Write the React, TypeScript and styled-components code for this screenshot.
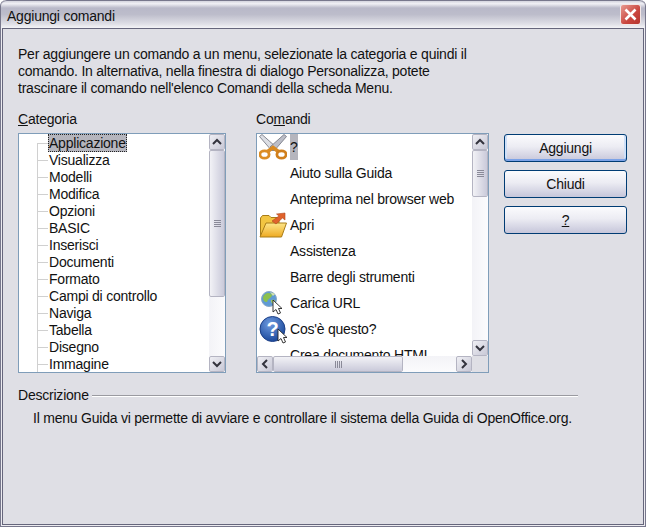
import React from 'react'
import styled, { createGlobalStyle } from 'styled-components'

const Global = createGlobalStyle`
  html, body { margin: 0; padding: 0; background: #fff; }
  * { box-sizing: border-box; }
`

const categories = ['Applicazione', 'Visualizza', 'Modelli', 'Modifica', 'Opzioni', 'BASIC', 'Inserisci', 'Documenti', 'Formato', 'Campi di controllo', 'Naviga', 'Tabella', 'Disegno', 'Immagine']

const Scissors = () => (
  <svg width="28" height="26" viewBox="0 0 28 26">
    <path d="M0.5 2.5 L3 0.5 L17 13 L13 17 Z" fill="#dcdee4" stroke="#7c7e88" strokeWidth="0.9" />
    <path d="M27.5 2.5 L25 0.5 L11 13 L15 17 Z" fill="#bcbec8" stroke="#7c7e88" strokeWidth="0.9" />
    <path d="M8 18 L14 13.5 L20 18" fill="none" stroke="#d98a22" strokeWidth="3.6" />
    <ellipse cx="5.5" cy="20.5" rx="4.6" ry="3.7" fill="none" stroke="#dc8d24" strokeWidth="2.8" />
    <ellipse cx="22.5" cy="20.5" rx="4.6" ry="3.7" fill="none" stroke="#d07f1c" strokeWidth="2.8" />
  </svg>
)

const FolderOpen = () => (
  <svg width="28" height="26" viewBox="0 0 28 26">
    <defs>
      <linearGradient id="flap" x1="0" y1="0" x2="0" y2="1">
        <stop offset="0" stopColor="#fde68a" />
        <stop offset="1" stopColor="#eeaa22" />
      </linearGradient>
    </defs>
    <path d="M1.5 24 L1.5 6 L3.5 3.5 L10 3.5 L12 5.5 L20 5.5 L20 24 Z" fill="#f2c542" stroke="#a87c18" />
    <path d="M1 25 L7 11 L27.5 11 L22.5 25 Z" fill="url(#flap)" stroke="#a87c18" />
    <path d="M13 9 L20 4 L17.5 2 L26 1 L26 8 L23.5 6 L17 12 Z" fill="#e0622c" stroke="#b04a20" strokeWidth="0.6" />
  </svg>
)

const Pointer = () => (
  <path d="M0 0 L0 12 L3 9.5 L5 14 L7.5 13 L5.5 8.5 L9 8.5 Z" fill="#fff" stroke="#222" strokeWidth="0.9" />
)

const GlobeCursor = () => (
  <svg width="28" height="28" viewBox="0 0 28 28">
    <circle cx="10" cy="10" r="7.5" fill="#5f9ad4" stroke="#8aa8c8" />
    <path d="M4 8 C6 3 11 3 13 6 C13 9 9 9 8 13 C5 13 4 11 4 8 Z" fill="#8cc04e" />
    <path d="M12 11 C15 10 17 11 16 14 C14 16 12 14 12 11 Z" fill="#a4cc64" />
    <path d="M11 3 L16 5 L14 7 Z" fill="#d5e4a8" />
    <g transform="translate(14 11)"><Pointer /></g>
  </svg>
)

const HelpCursor = () => (
  <svg width="30" height="30" viewBox="0 0 30 30">
    <defs>
      <radialGradient id="helpBlue" cx="40%" cy="30%" r="70%">
        <stop offset="0" stopColor="#6f9be0" />
        <stop offset="1" stopColor="#1c4a9c" />
      </radialGradient>
    </defs>
    <circle cx="13.5" cy="15" r="12.5" fill="url(#helpBlue)" stroke="#1c3f86" />
    <text x="13.5" y="22" fontFamily="'Liberation Sans', sans-serif" fontWeight="700" fontSize="20" fill="#fff" textAnchor="middle">?</text>
    <g transform="translate(19 15)"><Pointer /></g>
  </svg>
)

const commands: { label: string; icon?: React.ReactNode; selected?: boolean }[] = [
  { label: '?', icon: <Scissors />, selected: true },
  { label: 'Aiuto sulla Guida' },
  { label: 'Anteprima nel browser web' },
  { label: 'Apri', icon: <FolderOpen /> },
  { label: 'Assistenza' },
  { label: 'Barre degli strumenti' },
  { label: 'Carica URL', icon: <GlobeCursor /> },
  { label: "Cos'è questo?", icon: <HelpCursor /> },
  { label: 'Crea documento HTML' },
]

const Chevron = ({ dir }: { dir: 'up' | 'down' | 'left' | 'right' }) => {
  const points = {
    up: 'M1 6 L5 2 L9 6',
    down: 'M1 2 L5 6 L9 2',
    left: 'M6 1 L2 5 L6 9',
    right: 'M2 1 L6 5 L2 9',
  }[dir]
  const wide = dir === 'up' || dir === 'down'
  return (
    <svg width={wide ? 10 : 8} height={wide ? 8 : 10} viewBox={wide ? '0 0 10 8' : '0 0 8 10'}>
      <path d={points} fill="none" stroke="#33333d" strokeWidth="2" />
    </svg>
  )
}

const Window = styled.div`
  width: 646px;
  height: 527px;
  display: flex;
  flex-direction: column;
  border: 1px solid #77778c;
  border-top: 0;
  border-radius: 6px 6px 0 0;
  background: #ecebf0;
  font-family: "Liberation Sans", Arial, sans-serif;
  font-size: 14px;
  letter-spacing: -0.22px;
  color: #111;
  overflow: hidden;
`

const TitleBar = styled.div`
  height: 28px;
  flex: none;
  display: flex;
  align-items: center;
  justify-content: space-between;
  padding: 2px 4px 0 6px;
  border-top: 1px solid #77778c;
  border-radius: 6px 6px 0 0;
  background: linear-gradient(#d4d4de 0%, #f0f0f5 10%, #b8b8c8 26%, #bdbdcb 50%, #e0e0e7 86%, #f4f4f7 100%);
`

const CloseButton = styled.div`
  width: 21px;
  height: 21px;
  margin-top: -2px;
  display: flex;
  align-items: center;
  justify-content: center;
  border: 1px solid #f2e6e6;
  border-radius: 3px;
  background: linear-gradient(135deg, #e89a90, #c9453e 60%, #b5342f);
`

const Frame = styled.div`
  flex: 1;
  margin: 0 1px 1px;
  border: 1px solid #66667c;
  background: #dfdfe5;
  padding: 17px 0 0 15px;
  display: flex;
  flex-direction: column;
`

const Intro = styled.p`
  margin: 0;
  line-height: 17px;
`

const Columns = styled.div`
  margin-top: 14px;
  display: grid;
  grid-template-columns: 208px 233px 123px;
  column-gap: 30px;
  align-items: start;
`

const SideButtons = styled.div`
  margin: 23px 0 0 -15px;
  display: flex;
  flex-direction: column;
  gap: 8px;
`

const Action = styled.button<{ $default?: boolean }>`
  width: 123px;
  height: 28px;
  padding: 0;
  border: 1px solid #003c74;
  border-radius: 3px;
  background: linear-gradient(#fbfbfd, #ececf3 45%, #c6c6da);
  box-shadow: ${p => p.$default ? 'inset 0 -2px 0 #7ba2e7, inset 2px 0 0 #cfe0f8, inset -2px 0 0 #cfe0f8' : 'none'};
  font: inherit;
  letter-spacing: inherit;
  color: #111;
`

const FieldLabel = styled.div`
  height: 22px;
  line-height: 17px;
`

const ListBox = styled.div`
  height: 240px;
  display: flex;
  border: 1px solid #7f9db9;
  background: #fff;
  overflow: hidden;
`

const CommandBox = styled(ListBox)`
  display: grid;
  grid-template-columns: 215px 16px;
  grid-template-rows: 222px 16px;
`

const Tree = styled.div`
  flex: 1;
  min-width: 0;
  margin-left: 18px;
  padding-top: 1px;
  overflow: hidden;
`

const TreeRow = styled.div`
  height: 17px;
  display: flex;
  align-items: center;
  white-space: nowrap;
  background: linear-gradient(#d0d0d0, #d0d0d0) 0 0 / 1px 100% no-repeat;
  &:first-child {
    background-position: 0 100%;
    background-size: 1px 50%;
  }
  &::before {
    content: "";
    width: 11px;
    flex: none;
    border-top: 1px solid #d0d0d0;
  }
`

const TreeLabel = styled.span<{ $selected?: boolean }>`
  height: 17px;
  line-height: 16px;
  padding-left: 1px;
  ${p => p.$selected ? 'height: 18px; margin-top: -1px; line-height: 18px; padding-right: 1px; background: #b5b5bd; outline: 1px dotted #222; outline-offset: -1px;' : ''}
`

const CommandList = styled.div`
  overflow: hidden;
`

const CommandRow = styled.div`
  height: 26px;
  display: flex;
  align-items: center;
  white-space: nowrap;
`

const IconSlot = styled.div`
  width: 33px;
  height: 26px;
  flex: none;
  display: flex;
  align-items: center;
  padding-left: 2px;
`

const CommandLabel = styled.span<{ $selected?: boolean }>`
  ${p => p.$selected ? 'background: #b5b5bd; height: 26px; line-height: 26px; width: 8px;' : ''}
`

const VBar = styled.div`
  width: 16px;
  display: flex;
  flex-direction: column;
  background: linear-gradient(90deg, #f3f3f7, #fbfbfd);
`

const HBar = styled.div`
  height: 16px;
  display: flex;
  background: linear-gradient(#f3f3f7, #fbfbfd);
`

const ArrowButton = styled.div`
  width: 16px;
  height: 16px;
  flex: none;
  display: flex;
  align-items: center;
  justify-content: center;
  border: 1px solid #fff;
  outline: 1px solid #b4b4c2;
  outline-offset: -1px;
  border-radius: 2px;
  background: linear-gradient(135deg, #efeff4, #c8c8d6);
`

const Track = styled.div`
  flex: 1;
  min-width: 0;
  min-height: 0;
`

const Thumb = styled.div<{ $length: number; $horizontal?: boolean }>`
  ${p => p.$horizontal ? `width: ${p.$length}px; height: 16px;` : `height: ${p.$length}px; width: 16px;`}
  flex: none;
  display: flex;
  flex-direction: ${p => p.$horizontal ? 'row' : 'column'};
  gap: 1px;
  align-items: center;
  justify-content: center;
  border: 1px solid #fff;
  outline: 1px solid #b4b4c2;
  outline-offset: -1px;
  border-radius: 2px;
  background: ${p => p.$horizontal ? 'linear-gradient(#f2f2f6, #cacada)' : 'linear-gradient(90deg, #f2f2f6, #cacada)'};
`

const Grip = styled.i<{ $horizontal?: boolean }>`
  display: block;
  background: #8a8a98;
  ${p => p.$horizontal ? 'width: 1px; height: 7px;' : 'width: 7px; height: 1px;'}
`

const Corner = styled.div`
  background: #dfdfe5;
`

const DescriptionHead = styled.div`
  margin-top: 14px;
  width: 560px;
  display: flex;
  align-items: center;
  gap: 3px;
  line-height: 17px;
  &::after {
    content: "";
    flex: 1;
    border-top: 1px solid #9a9aa0;
    border-bottom: 1px solid #fff;
  }
`

const DescriptionText = styled.p`
  margin: 6px 0 0 15px;
  line-height: 17px;
`

const Grips = ({ horizontal }: { horizontal?: boolean }) => (
  <>
    <Grip $horizontal={horizontal} />
    <Grip $horizontal={horizontal} />
    <Grip $horizontal={horizontal} />
    <Grip $horizontal={horizontal} />
  </>
)

const VScroll = ({ thumb }: { thumb: number }) => (
  <VBar>
    <ArrowButton><Chevron dir="up" /></ArrowButton>
    <Thumb $length={thumb}><Grips /></Thumb>
    <Track />
    <ArrowButton><Chevron dir="down" /></ArrowButton>
  </VBar>
)

export default function App() {
  return (
    <>
      <Global />
      <Window>
        <TitleBar>
          <span>Aggiungi comandi</span>
          <CloseButton>
            <svg width="13" height="13" viewBox="0 0 13 13">
              <path d="M1.5 1.5 L11.5 11.5 M11.5 1.5 L1.5 11.5" stroke="#fff" strokeWidth="2.6" />
            </svg>
          </CloseButton>
        </TitleBar>
        <Frame>
          <Intro>
            Per aggiungere un comando a un menu, selezionate la categoria e quindi il<br />
            comando. In alternativa, nella finestra di dialogo Personalizza, potete<br />
            trascinare il comando nell'elenco Comandi della scheda Menu.
          </Intro>
          <Columns>
            <div>
              <FieldLabel><u>C</u>ategoria</FieldLabel>
              <ListBox>
                <Tree>
                  {categories.map((c, i) => (
                    <TreeRow key={c}><TreeLabel $selected={i === 0}>{c}</TreeLabel></TreeRow>
                  ))}
                </Tree>
                <VScroll thumb={147} />
              </ListBox>
            </div>
            <div>
              <FieldLabel>Co<u>m</u>andi</FieldLabel>
              <CommandBox>
                <CommandList>
                  {commands.map(c => (
                    <CommandRow key={c.label}>
                      <IconSlot>{c.icon}</IconSlot>
                      <CommandLabel $selected={c.selected}>{c.label}</CommandLabel>
                    </CommandRow>
                  ))}
                </CommandList>
                <VScroll thumb={47} />
                <HBar>
                  <ArrowButton><Chevron dir="left" /></ArrowButton>
                  <Thumb $length={130} $horizontal><Grips horizontal /></Thumb>
                  <Track />
                  <ArrowButton><Chevron dir="right" /></ArrowButton>
                </HBar>
                <Corner />
              </CommandBox>
            </div>
            <SideButtons>
              <Action $default>Aggiungi</Action>
              <Action>Chiudi</Action>
              <Action><u>?</u></Action>
            </SideButtons>
          </Columns>
          <DescriptionHead>Descrizione</DescriptionHead>
          <DescriptionText>
            Il menu Guida vi permette di avviare e controllare il sistema della Guida di OpenOffice.org.
          </DescriptionText>
        </Frame>
      </Window>
    </>
  )
}
